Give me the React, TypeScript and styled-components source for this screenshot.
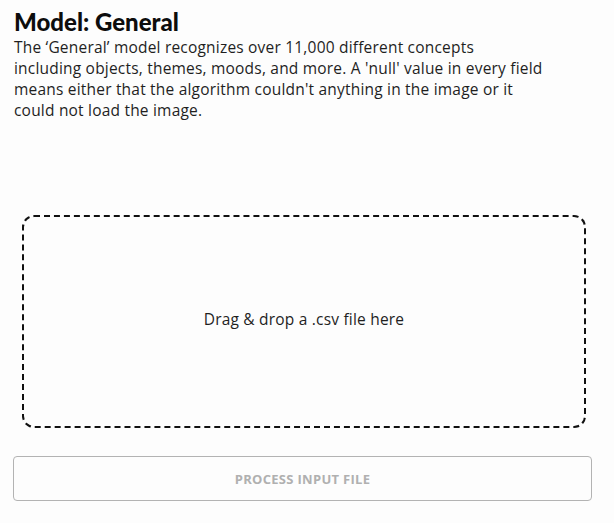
import React from "react";
import styled, { createGlobalStyle } from "styled-components";

const Global = createGlobalStyle`
  html, body { margin: 0; padding: 0; background: #fdfdfd; }
  body { font-family: "Open Sans", "Lato", sans-serif; color: #1c1c1c; }
`;

const Page = styled.div`
  width: 614px;
  height: 523px;
  box-sizing: border-box;
  padding: 9px 22px 0 13px;
  display: flex;
  flex-direction: column;
`;

const Header = styled.div`
  padding-left: 1px;
`;

const Title = styled.h1`
  margin: 0;
  font-family: "Lato", sans-serif;
  font-weight: 900;
  font-size: 24px;
  line-height: 26px;
  color: #0d0d0d;
`;

const Description = styled.p`
  margin: 2px 0 0;
  font-size: 15.5px;
  letter-spacing: 0.2px;
  line-height: 21px;
  white-space: nowrap;
  color: #1f1f1f;
`;

const DropZone = styled.div`
  margin: 94px 6px 0 9px;
  height: 213px;
  box-sizing: border-box;
  padding-bottom: 5px;
  border: 2px dashed #111;
  border-radius: 12px;
  display: flex;
  align-items: center;
  justify-content: center;
  font-size: 15.5px;
  letter-spacing: 0.2px;
  color: #1f1f1f;
`;

const ProcessButton = styled.button`
  margin-top: 28px;
  height: 45px;
  width: 100%;
  box-sizing: border-box;
  background: transparent;
  border: 1.5px solid #b3b3b3;
  border-radius: 4px;
  font-family: "Open Sans", sans-serif;
  font-weight: 700;
  font-size: 13px;
  letter-spacing: 0.3px;
  color: #b0b0b0;
  cursor: default;
`;

export default function App() {
  return (
    <>
      <Global />
      <Page>
        <Header>
          <Title>Model: General</Title>
          <Description>
            The ‘General’ model recognizes over 11,000 different concepts
            <br />
            including objects, themes, moods, and more. A 'null' value in every field
            <br />
            means either that the algorithm couldn't anything in the image or it
            <br />
            could not load the image.
          </Description>
        </Header>
        <DropZone>Drag &amp; drop a .csv file here</DropZone>
        <ProcessButton disabled>PROCESS INPUT FILE</ProcessButton>
      </Page>
    </>
  );
}
